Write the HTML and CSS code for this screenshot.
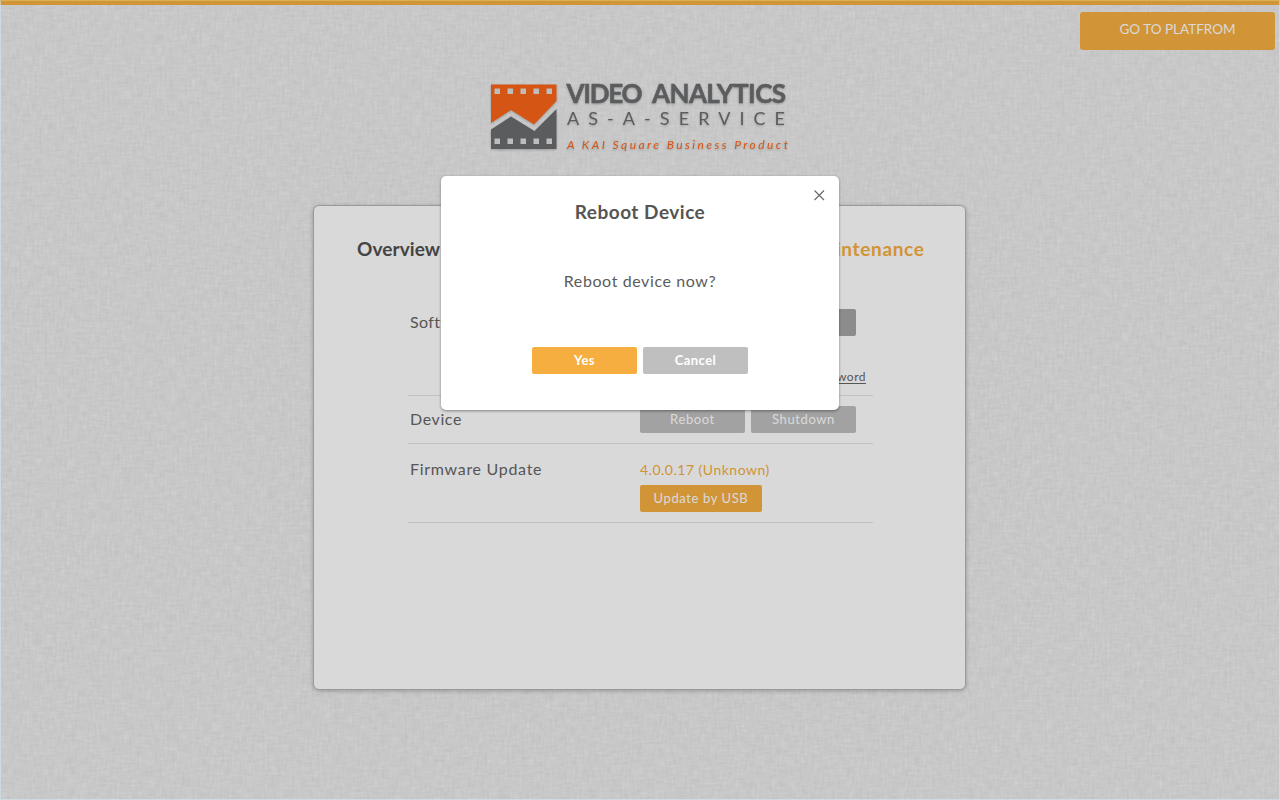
FILE: index.html
```html
<!DOCTYPE html>
<html lang="en">
<head>
<meta charset="utf-8">
<title>Video Analytics as a Service</title>
<link rel="stylesheet" href="styles.css">
</head>
<body>
<svg class="linen" width="1280" height="800" aria-hidden="true">
  <filter id="warp" x="0" y="0" width="100%" height="100%" color-interpolation-filters="sRGB">
    <feTurbulence type="fractalNoise" baseFrequency="0.09 0.4" numOctaves="2" seed="4"/>
    <feColorMatrix values="0 0 0 0 0  0 0 0 0 0  0 0 0 0 0  .065 0 0 0 -.01"/>
  </filter>
  <filter id="weft" x="0" y="0" width="100%" height="100%" color-interpolation-filters="sRGB">
    <feTurbulence type="fractalNoise" baseFrequency="0.4 0.09" numOctaves="2" seed="9"/>
    <feColorMatrix values="0 0 0 0 0  0 0 0 0 0  0 0 0 0 0  .065 0 0 0 -.01"/>
  </filter>
  <rect width="1280" height="800" filter="url(#warp)"/>
  <rect width="1280" height="800" filter="url(#weft)"/>
</svg>
<div class="page">
  <header class="top"><a class="platform">GO TO PLATFROM</a></header>
  <svg class="logo" width="310" height="80" viewBox="485 78 310 80">
    <path fill="#fb6518" d="M491 84.500H556.500V101L534 124.500L511 110L491 123Z"/>
    <path fill="#6b6d6f" d="M491 149V129.500L511 116.500L534.500 131L556.500 109V149Z"/>
    <path fill="#dedede" d="M494.500 88.500h5.500v5.500h-5.500ZM507.500 88.500h5.500v5.500h-5.500ZM520.500 88.500h5.500v5.500h-5.500ZM533.500 88.500h5.500v5.500h-5.500ZM546.500 88.500h5.500v5.500h-5.500ZM494.500 138.500h5.500v5.500h-5.500ZM507.500 138.500h5.500v5.500h-5.500ZM520.500 138.500h5.500v5.500h-5.500ZM533.500 138.500h5.500v5.500h-5.500ZM546.500 138.500h5.500v5.500h-5.500Z"/>
    <text class="brand" x="566.500" y="102.800" textLength="76">VIDEO</text>
    <text class="brand" x="652" y="102.800" textLength="134">ANALYTICS</text>
    <text class="sub" x="567" y="124.700" textLength="218">AS-A-SERVICE</text>
    <text class="tag" x="567" y="149.300" textLength="221">A KAI Square Business Product</text>
  </svg>
  <main class="panel">
    <nav class="tabs"><span class="tab">Overview</span><span class="tab active">Maintenance</span></nav>
    <section class="row software">
      <span class="label">Software</span>
      <div class="value"><span class="btn dark">Restart</span><span class="btn dark"></span></div>
      <span class="link">Change Password</span>
    </section>
    <section class="row device">
      <span class="label">Device</span>
      <div class="value"><span class="btn">Reboot</span><span class="btn shut">Shutdown</span></div>
    </section>
    <section class="row firmware">
      <span class="label">Firmware Update</span>
      <div class="value stack"><span class="version">4.0.0.17 (Unknown)</span><span class="btn gold usb">Update by USB</span></div>
    </section>
  </main>
</div>
<div class="overlay">
  <div class="modal">
    <svg class="close" width="12" height="12" viewBox="0 0 12 12"><path d="M1.500 1.500L11 11M11 1.500L1.500 11" stroke="#666" stroke-width="1.100"/></svg>
    <h1 class="title">Reboot Device</h1>
    <p class="message">Reboot device now?</p>
    <div class="actions"><span class="btn gold yes">Yes</span><span class="btn light cancel">Cancel</span></div>
  </div>
</div>
<div class="frame"></div>
</body>
</html>
```
FILE: styles.css
```css
* { box-sizing: border-box; }
body { margin: 0; width: 1280px; height: 800px; overflow: hidden; background: #f6f6f6; font-family: Lato, "Noto Sans", sans-serif; color: #666; }
.linen { position: absolute; left: 0; top: 0; }
.page { position: relative; height: 800px; border-top: 5px solid #f6ae40; display: flex; flex-direction: column; align-items: center; }
.top { align-self: stretch; display: flex; justify-content: flex-end; padding: 7px 5px 0 0; }
.platform { width: 195px; height: 38px; border-radius: 3px; background: #f6ae40; color: #fff; font-size: 13.5px; line-height: 35px; text-align: center; }
.logo { margin-top: 28px; filter: drop-shadow(0 1.5px 1px rgba(0,0,0,.22)); }
.brand { font: 700 26px Lato, sans-serif; fill: #6b6d6f; stroke: #6b6d6f; stroke-width: .5; }
.sub { font: 400 18px Lato, sans-serif; fill: #6b6d6f; }
.tag { font: italic 400 12px Lato, sans-serif; fill: #fb6518; }
.panel { width: 653px; height: 485px; margin: 47px 1px 0 0; border: 1px solid #b5b5b5; border-radius: 6px; background: #fff; box-shadow: 0 1px 4px rgba(0,0,0,.25); }
.tabs { display: flex; justify-content: space-between; padding: 30px 41px 0 43px; height: 92px; font-size: 19px; line-height: 26px; font-weight: 700; color: #505050; letter-spacing: .1px; }
.active { color: #f6ae40; letter-spacing: .65px; margin-right: -.5px; }
.row { display: flex; width: 465px; margin-left: 94px; border-bottom: 1px solid #e4e4e4; position: relative; padding-left: 2px; }
.label { width: 230px; font-size: 16px; line-height: 26px; letter-spacing: .6px; }
.software .label { letter-spacing: .4px; }
.firmware .label { margin-top: -1px; letter-spacing: .7px; }
.value { display: flex; gap: 6px; }
.stack { flex-direction: column; align-items: flex-start; gap: 2px; }
.software { height: 98px; padding-top: 11px; }
.device { height: 48px; padding-top: 10px; }
.firmware { height: 79px; padding-top: 13px; }
.link { position: absolute; right: 7px; bottom: 11px; border-bottom: 1px solid #666; font-size: 12px; line-height: 13px; letter-spacing: .5px; }
.btn { width: 105px; height: 27px; border-radius: 2px; background: #bfbfbf; color: #fff; font-size: 13px; line-height: 27px; text-align: center; letter-spacing: .6px; }
.dark { background: #a5a5a5; }
.gold { background: #f6ae40; }
.usb { width: 122px; }
.version { color: #f6ae40; font-size: 14px; line-height: 25px; height: 26px; letter-spacing: .5px; }
.overlay { position: absolute; left: 0; top: 0; width: 1280px; height: 800px; background: rgba(0,0,0,.15); display: flex; justify-content: center; align-items: flex-start; padding-top: 176px; }
.modal { position: relative; width: 398px; height: 234px; border-radius: 5px; background: #fff; box-shadow: 0 1px 3px rgba(0,0,0,.4); text-align: center; }
.close { position: absolute; right: 14px; top: 13px; }
.title { margin: 23px 0 0; font-size: 19px; line-height: 26px; font-weight: 700; color: #555; letter-spacing: .5px; }
.message { margin: 43px 0 0; font-size: 16px; line-height: 26px; color: #5c5c5c; letter-spacing: .6px; }
.actions { display: flex; justify-content: center; gap: 6px; margin-top: 53px; }
.light { background: #bfbfbf; }
.yes, .cancel { font-weight: 700; letter-spacing: .45px; }
.frame { position: absolute; left: 0; top: 0; width: 1280px; height: 800px; border: 1px solid rgba(205,235,240,.6); border-top-color: rgba(225,220,130,.4); pointer-events: none; }
```
